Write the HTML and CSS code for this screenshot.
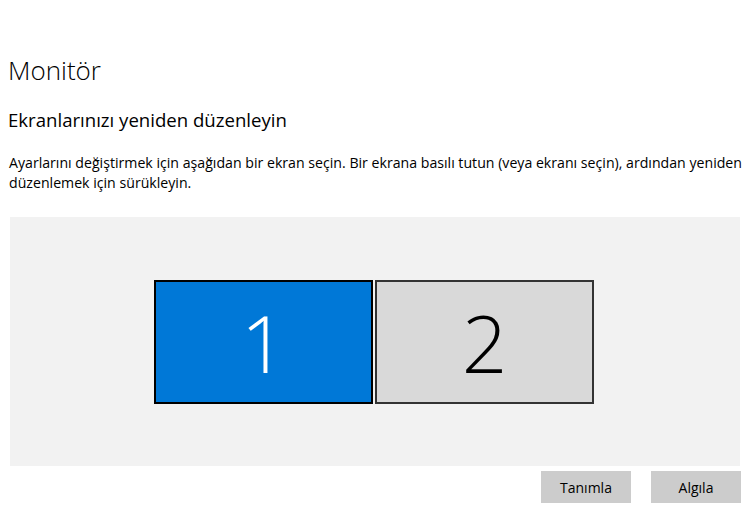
FILE: index.html
```html
<!DOCTYPE html>
<html lang="tr">
<head>
    <meta charset="UTF-8">
    <meta name="viewport" content="width=device-width, initial-scale=1.0">
    <title>Monitör</title>
    <link rel="stylesheet" href="styles.css">
</head>
<body>

<div class="sayfa">
    <h1>Monitör</h1>
    <h2>Ekranlarınızı yeniden düzenleyin</h2>

    <p class="aciklama">Ayarlarını değiştirmek için aşağıdan bir ekran seçin. Bir ekrana basılı tutun (veya ekranı seçin), ardından yeniden<br>düzenlemek için sürükleyin.</p>

    <div class="ekranlar">
        <div class="ekran secili">1</div>
        <div class="ekran">2</div>
    </div>

    <div class="butonlar">
        <button>Tanımla</button>
        <button>Algıla</button>
    </div>
</div>

</body>
</html>
```

FILE: styles.css
```css
        body {
            margin: 0;
            font-family: "Open Sans", "Noto Sans", sans-serif;
            background-color: #fff;
            color: #000;
        }
        .sayfa {
            padding: 52px 0 0 8px;
        }
        h1 {
            font-size: 26px;
            font-weight: 300;
            line-height: 36px;
            margin: 0;
        }
        h2 {
            font-size: 18.6px;
            font-weight: 400;
            line-height: 28px;
            margin: 18px 0 0 0;
        }
        .aciklama {
            font-size: 14.15px;
            line-height: 20px;
            white-space: nowrap;
            margin: 19px 0 0 1px;
        }
        .ekranlar {
            width: 728px;
            height: 249px;
            margin: 24px 0 0 2px;
            padding-right: 2px;
            background-color: #f2f2f2;
            display: flex;
            justify-content: center;
            align-items: center;
            gap: 2px;
        }
        .ekran {
            width: 215px;
            height: 120px;
            background-color: #d9d9d9;
            border: 2px solid #333;
            display: flex;
            justify-content: center;
            align-items: center;
            font-size: 80px;
            font-weight: 300;
        }
        .ekran.secili {
            background-color: #0078d7;
            border-color: #000;
            color: #fff;
        }
        .butonlar {
            width: 733px;
            display: flex;
            justify-content: flex-end;
            gap: 20px;
            margin-top: 5px;
        }
        button {
            width: 90px;
            height: 32px;
            background-color: #ccc;
            border: none;
            font-family: "Open Sans", "Noto Sans", sans-serif;
            font-size: 14px;
            color: #000;
            padding: 0;
        }
```
